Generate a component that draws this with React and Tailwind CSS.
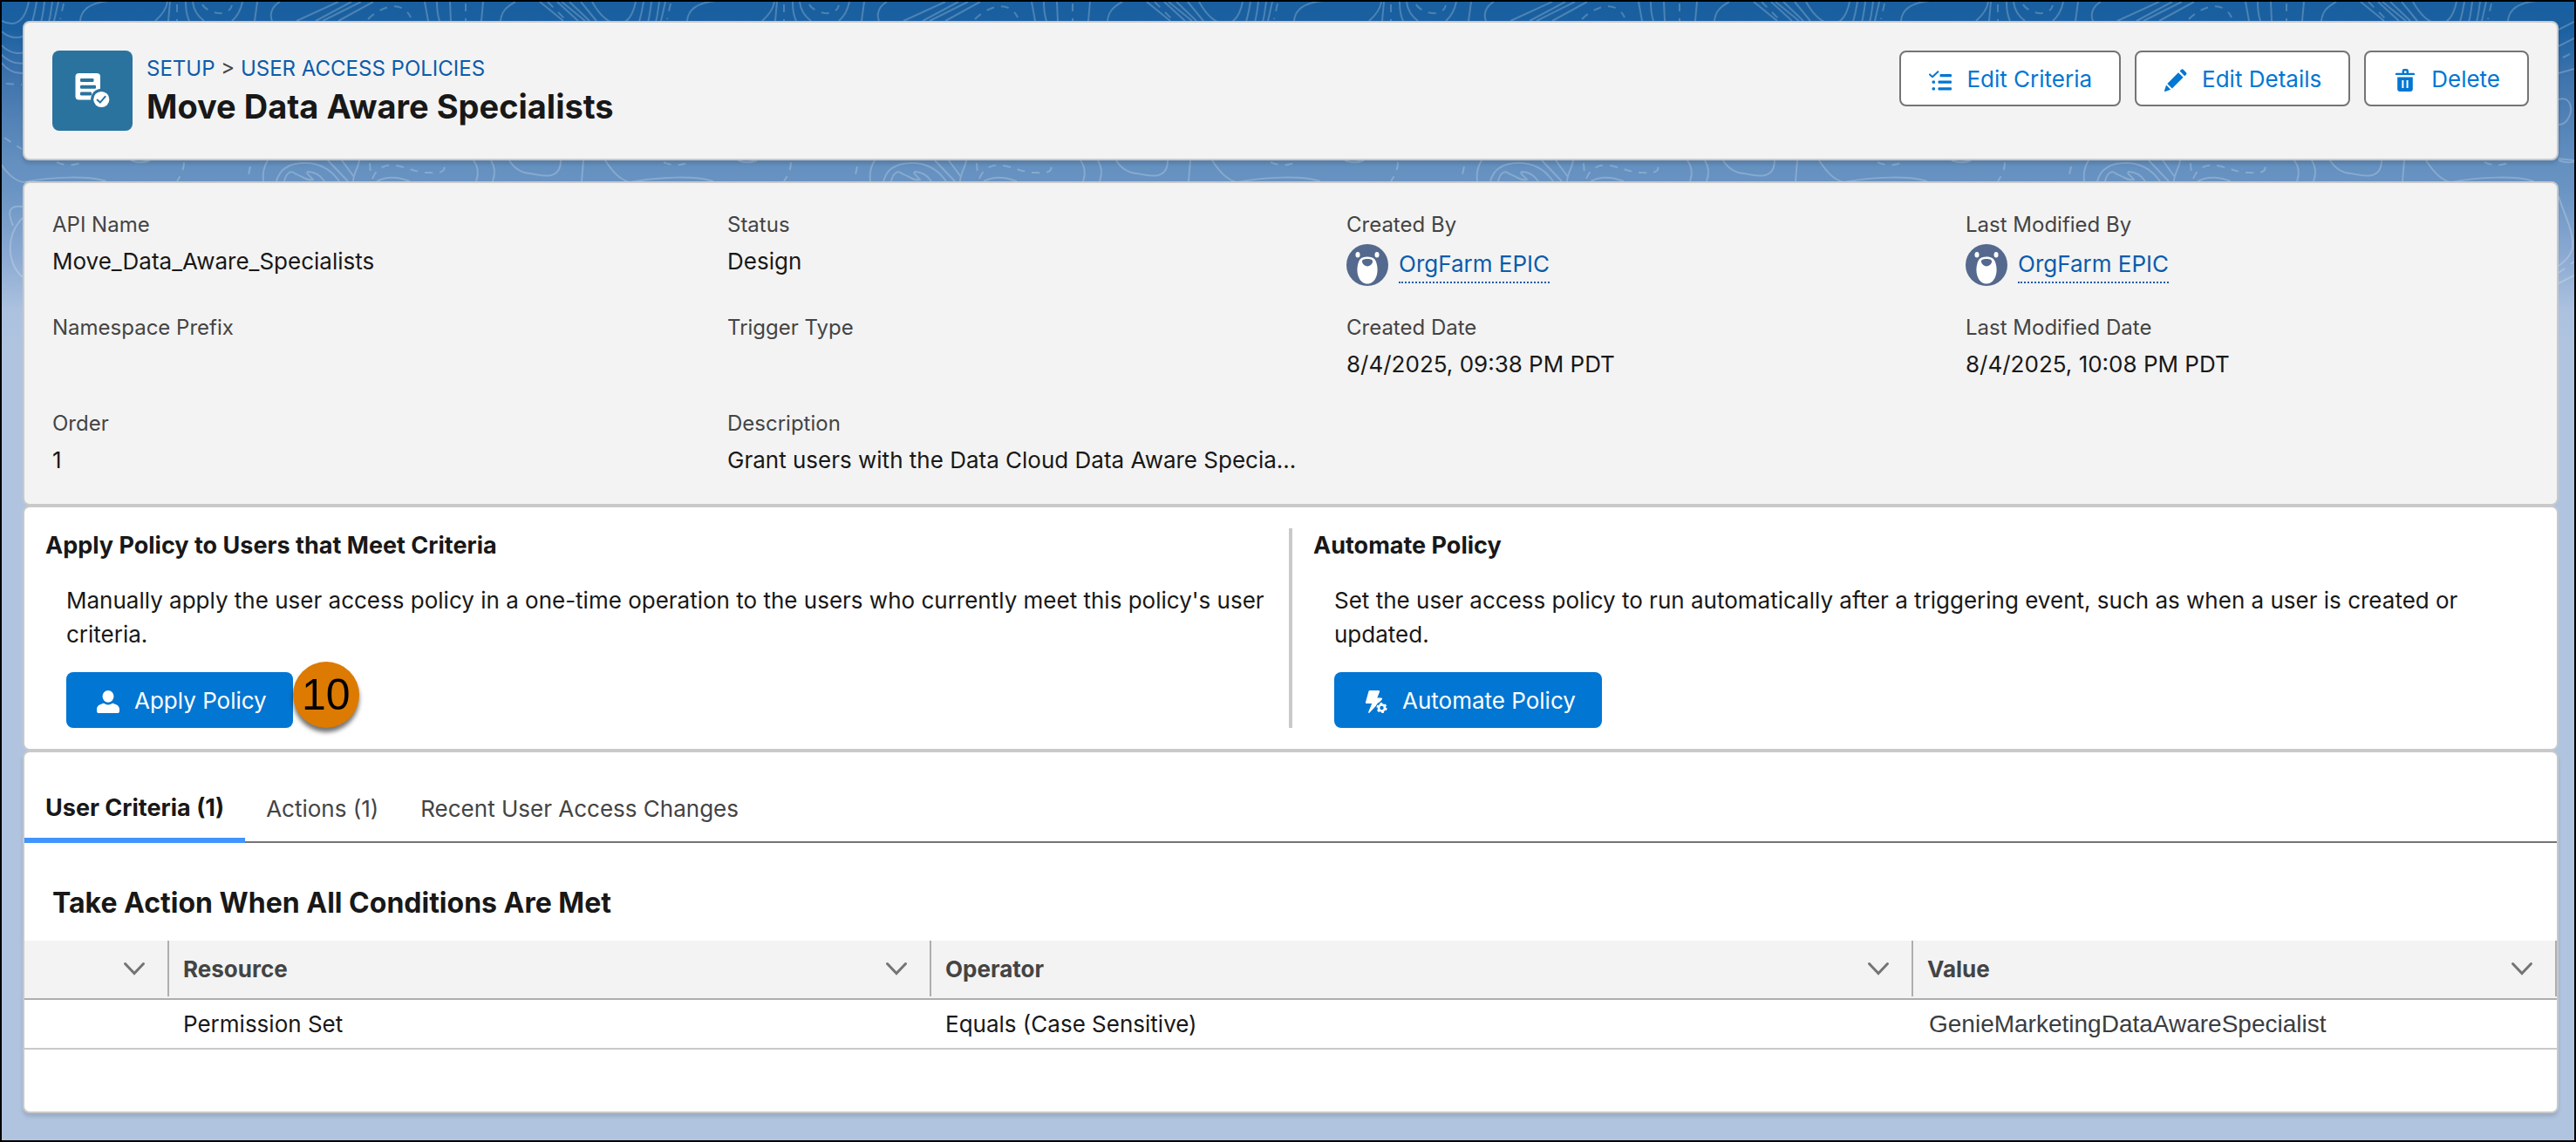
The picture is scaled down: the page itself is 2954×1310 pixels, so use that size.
import { useState } from "react";

const CONTOURS = [
  "M-17 2 C-8 18 2 27 13 27 C24 27 30 16 33 2",
  "M42 2 C40 14 38 26 32 38 C26 44 12 46 2 36 M51 2 C49 20 44 42 36 54 C28 64 12 64 0 50",
  "M60 2 C58 20 52 50 42 64 C32 76 14 76 0 61 M67 2 L62 24 C56 60 40 84 24 84 C14 84 6 78 0 70",
  "M92 24 C93 10 105 3 125 1 M178 24 C186 17 191 10 192 2 M195 2 L193 24",
  "M213 2 C213 10 214 18 217 24 M221 2 C222 12 226 18 234 24 M278 2 C276 12 273 18 266 24 M295 2 L292 24",
  "M321 2 C311 8 309 17 312 24 M388 2 L340 24 M403 2 L362 24 M414 2 L370 24 M428 2 L388 24",
  "M487 2 L491 24 M501 2 C501 12 502 18 504 24 M516 2 L517 24 M554 2 L552 24 M591 2 C580 8 575 14 574 24",
  "M619 2 L646 24 M639 2 L663 24 M644 2 L671 24 M653 2 L676 24 M666 2 L684 24",
  "M150 34 L168 25 M150 53 L168 44 M150 84 L168 79",
  "M150 114 C163 110 167 124 162 134 C159 141 154 143 150 143 M150 182 L168 184",
  "M150 225 C156 246 168 265 166 285 C162 297 156 300 150 305 M150 325 L168 316",
  "M-2 184 C6 196 14 206 26 209 C60 203 100 201 122 208 M150 184 C158 187 166 187 172 184",
  "M26 237 C10 235 8 243 15 259 M26 250 C6 270 8 302 26 318",
  "M307 184 C302 192 301 200 302 208 M317 208 C321 192 335 187 350 187 C368 187 380 195 389 208",
  "M326 208 C328 198 334 195 338 199 C346 202 352 208 359 206 C356 202 350 199 353 197 C362 197 368 202 372 208",
  "M376 184 L399 208 M392 184 L406 203 M412 184 C411 192 405 200 405 208 M432 208 C445 201 460 204 470 208",
  "M543 184 C549 192 549 200 546 208 M563 184 C568 192 568 200 565 208",
  "M584 184 C590 194 600 199 608 199 C616 200 624 203 632 201 C640 199 643 192 643 184 M669 184 L667 208",
];

const DASHED = [
  "M73 4 L69 22 M203 5 L203 24 M232 5 C236 14 262 22 266 6",
  "M422 22 C438 6 462 0 471 20 M534 4 L534 24 M628 2 L650 24",
  "M7 96 L25 97 M5 158 L25 171 M155 66 L165 61 M150 313 L168 300",
  "M65 186 C75 191 85 190 97 185 M211 186 C211 195 207 202 203 208 M287 191 L284 205",
  "M424 187 L425 200 M427 205 C433 190 445 188 455 190 C470 193 480 199 494 198 C510 200 513 192 506 186",
];

const TILE = 696;

function Backdrop() {
  return (
    <div className="absolute inset-0 overflow-hidden bg-[#b0c4df]">
      <div className="h-[400px] bg-[linear-gradient(to_bottom,#195f9f_0%,#1b61a1_8%,#4074ad_22%,#6490c0_46%,#6893c2_53%,#8dabd3_74%,#abc1df_88%,#b0c4df_100%)]">
        <svg className="h-full w-full" fill="none" stroke="#ffffff" strokeOpacity="0.22" strokeWidth="2" aria-hidden="true">
          {[0, 1, 2, 3, 4].map((n) => (
            <g key={n} transform={`translate(${n * TILE - 2} -2)`}>
              {CONTOURS.map((d) => (
                <path key={d} d={d} />
              ))}
              {DASHED.map((d) => (
                <path key={d} d={d} strokeDasharray="9 8" />
              ))}
            </g>
          ))}
        </svg>
      </div>
    </div>
  );
}

function PolicyIcon() {
  return (
    <svg viewBox="0 0 92 92" className="size-[92px] shrink-0 rounded-lg bg-[#2a739e]" aria-hidden="true">
      <rect x="26.5" y="26" width="28.5" height="30.5" rx="4" fill="#fff" />
      <g fill="#2a739e">
        <rect x="32" y="32" width="15.5" height="4" rx="1.2" />
        <rect x="32" y="39.7" width="18" height="4" rx="1.2" />
        <rect x="32" y="47.4" width="13" height="4" rx="1.2" />
        <circle cx="56.3" cy="56" r="12.2" />
      </g>
      <circle cx="56.3" cy="56" r="9.1" fill="#fff" />
      <path d="M51.6 56.6 L54.8 59.6 L60.6 52.8" fill="none" stroke="#2a739e" strokeWidth="2" strokeLinecap="round" strokeLinejoin="round" />
    </svg>
  );
}

function ChecklistIcon() {
  return (
    <svg viewBox="0 0 28 28" className="mt-1 size-7" fill="currentColor" aria-hidden="true">
      <path d="M2 7.4 L5 10.2 L11.4 4.2" fill="none" stroke="currentColor" strokeWidth="2" strokeLinecap="round" strokeLinejoin="round" />
      <rect x="13.5" y="7" width="13.5" height="3.2" rx="1" />
      <rect x="11.5" y="14.6" width="15.5" height="3.2" rx="1" />
      <rect x="11.5" y="22.2" width="15.5" height="3.2" rx="1" />
      <rect x="4.6" y="14.6" width="3.4" height="3.2" rx="1" />
      <rect x="4.6" y="22.2" width="3.4" height="3.2" rx="1" />
    </svg>
  );
}

function PencilIcon() {
  return (
    <svg viewBox="0 0 28 28" className="mt-1 size-7" fill="currentColor" aria-hidden="true">
      <path d="M20.4 1.8 a1.6 1.6 0 0 1 2.3 0 L26 5.2 a1.6 1.6 0 0 1 0 2.3 L24.2 9.2 L18.6 3.6 Z" />
      <path d="M17 5.2 L22.6 10.8 L9.8 23.4 L4.3 17.9 Z" />
      <path d="M3.1 19.6 L8.2 24.7 L2 27 a0.8 0.8 0 0 1 -1 -1 Z" />
    </svg>
  );
}

function TrashIcon() {
  return (
    <svg viewBox="0 0 28 28" className="mt-1 size-7" fill="currentColor" aria-hidden="true">
      <path d="M3 6.8 a1 1 0 0 1 1 -1 H10.6 V3.4 a2.4 2.4 0 0 1 2.4 -2.4 H15.6 a2.4 2.4 0 0 1 2.4 2.4 V5.8 H24 a1 1 0 0 1 1 1 V8 H3 Z M13 3.6 V5.8 H15.6 V3.6 Z" fillRule="evenodd" />
      <path d="M5.2 10.6 H22.8 V24 a3 3 0 0 1 -3 3 H8.2 a3 3 0 0 1 -3 -3 Z M10.4 14 V23 H12.4 V14 Z M15.6 14 V23 H17.6 V14 Z" fillRule="evenodd" />
    </svg>
  );
}

function UserIcon() {
  return (
    <svg viewBox="0 0 28 28" className="mt-1 size-7" fill="currentColor" aria-hidden="true">
      <ellipse cx="14" cy="7.8" rx="6.5" ry="6.9" />
      <path d="M1 23 C1 18 4.6 17.2 7.8 16 C9.2 15.6 9.8 16.2 10.8 16.7 C12.8 17.7 15.2 17.7 17.2 16.7 C18.2 16.2 18.8 15.6 20.2 16 C23.4 17.2 27 18 27 23 V24.4 A2.6 2.6 0 0 1 24.4 27 H3.6 A2.6 2.6 0 0 1 1 24.4 Z" />
    </svg>
  );
}

function FlowIcon() {
  return (
    <svg viewBox="0 0 28 28" className="mt-1 size-7" fill="currentColor" aria-hidden="true">
      <path d="M7 1 H17 C18 1 18.3 1.8 18 2.6 L15.4 9.6 H20 C21 9.6 21.3 10.6 20.7 11.4 L6.6 26.6 C5.8 27.4 4.8 26.8 5.2 25.8 L9.2 16 H3.2 C2.4 16 1.8 15.3 2 14.4 L5.4 2.2 C5.6 1.4 6.2 1 7 1 Z" />
      <circle cx="20.5" cy="21" r="7" fill="#0176d3" />
      <circle cx="20.5" cy="21" r="3.5" fill="none" stroke="currentColor" strokeWidth="2.6" />
      <circle cx="20.5" cy="21" r="5.2" fill="none" stroke="currentColor" strokeWidth="1.8" strokeDasharray="2.8 2.65" />
    </svg>
  );
}

function Avatar() {
  return (
    <svg viewBox="0 0 48 48" className="size-12 shrink-0" aria-hidden="true">
      <circle cx="24" cy="24" r="24" fill="#54698d" />
      <g fill="#fff">
        <ellipse cx="13" cy="12.3" rx="2.5" ry="3.2" />
        <ellipse cx="35" cy="12.3" rx="2.5" ry="3.2" />
        <path d="M24 14.5 C32 14.5 34 18.5 35.2 25 C37 35 32.5 45.6 24 45.6 C15.5 45.6 11 35 12.8 25 C14 18.5 16 14.5 24 14.5 Z" />
      </g>
      <path d="M24 17 C28 17 30.5 18 30 20.6 C29.4 23.6 26.6 25.4 24 25.4 C21.4 25.4 18.6 23.6 18 20.6 C17.5 18 20 17 24 17 Z" fill="#54698d" />
    </svg>
  );
}

function HeaderButton({ icon, children }) {
  return (
    <button className="flex h-16 items-center gap-4 rounded-lg border-2 border-[#747474] bg-white px-[31px] text-[#0176d3]">
      {icon}
      {children}
    </button>
  );
}

function BrandButton({ icon, children }) {
  return (
    <button className="flex h-16 items-center gap-4 rounded-lg bg-[#0176d3] pr-[30px] pl-[34px] text-white">
      {icon}
      {children}
    </button>
  );
}

function Field({ label, children }) {
  return (
    <div>
      <dt className="mb-1 text-[24px] leading-9 text-[#444444]">{label}</dt>
      <dd className="leading-10 whitespace-nowrap">{children}</dd>
    </div>
  );
}

function UserLink({ name }) {
  return (
    <span className="flex items-center gap-3">
      <Avatar />
      <a href="#user" className="border-b-2 border-dotted border-[#0b5cab] text-[#0b5cab]">
        {name}
      </a>
    </span>
  );
}

const tabs = ["User Criteria (1)", "Actions (1)", "Recent User Access Changes"];

const columns = [
  { label: "", width: "w-[166px]" },
  { label: "Resource", width: "w-[874px]" },
  { label: "Operator", width: "w-[1126px]" },
  { label: "Value", width: "w-auto" },
];

const card = "rounded-lg border-2 border-[#c9c9c9]";

function App() {
  const [activeTab, setActiveTab] = useState(tabs[0]);

  return (
    <div className="relative min-h-screen border-2 border-black font-['Inter','Liberation_Sans',sans-serif] text-[26px] text-[#181818]">
      <Backdrop />

      <main className="relative pt-[22px] pr-[18px] pb-7 pl-6">
        <header className={`${card} mb-6 flex items-start justify-between bg-[#f3f3f3] p-8 shadow-[0_4px_4px_rgba(0,0,0,0.12)]`}>
          <div className="flex gap-4">
            <PolicyIcon />
            <div className="pt-[3px]">
              <nav className="text-[24px] leading-9 text-[#444444]">
                <a href="#setup" className="text-[#0b5cab]">SETUP</a>
                {" > "}
                <a href="#policies" className="text-[#0b5cab]">USER ACCESS POLICIES</a>
              </nav>
              <h1 className="text-[38px] leading-[50px] font-bold">Move Data Aware Specialists</h1>
            </div>
          </div>
          <div className="mb-7 flex gap-4">
            <HeaderButton icon={<ChecklistIcon />}>Edit Criteria</HeaderButton>
            <HeaderButton icon={<PencilIcon />}>Edit Details</HeaderButton>
            <HeaderButton icon={<TrashIcon />}>Delete</HeaderButton>
          </div>
        </header>

        <section className={`${card} bg-[#f3f3f3] px-8 py-[30px]`}>
          <dl className="grid grid-cols-[774fr_710fr_710fr_646fr] gap-y-[30px]">
            <Field label="API Name">Move_Data_Aware_Specialists</Field>
            <Field label="Status">Design</Field>
            <Field label="Created By"><UserLink name="OrgFarm EPIC" /></Field>
            <Field label="Last Modified By"><UserLink name="OrgFarm EPIC" /></Field>
            <Field label="Namespace Prefix" />
            <Field label="Trigger Type" />
            <Field label="Created Date">8/4/2025, 09:38 PM PDT</Field>
            <Field label="Last Modified Date">8/4/2025, 10:08 PM PDT</Field>
            <Field label="Order">1</Field>
            <Field label="Description">Grant users with the Data Cloud Data Aware Specia...</Field>
          </dl>
        </section>

        <section className={`${card} flex bg-white py-6`}>
          <div className="flex-1 border-r-2 border-[#c9c9c9] px-6">
            <h2 className="mb-6 text-[27px] leading-[39px] font-bold">Apply Policy to Users that Meet Criteria</h2>
            <div className="pl-6">
              <p className="mb-6 leading-[39px]">
                Manually apply the user access policy in a one-time operation to the users who currently meet this
                policy's user criteria.
              </p>
              <div className="relative w-fit">
                <BrandButton icon={<UserIcon />}>Apply Policy</BrandButton>
                <span className="absolute bottom-0 left-full flex size-[76px] items-center justify-center rounded-full bg-[#dd7a01] font-['Liberation_Sans',sans-serif] text-[50px] leading-none text-black shadow-[0_5px_5px_rgba(0,0,0,0.55)]">
                  10
                </span>
              </div>
            </div>
          </div>
          <div className="flex-1 border-l-2 border-[#c9c9c9] px-6">
            <h2 className="mb-6 text-[27px] leading-[39px] font-bold">Automate Policy</h2>
            <div className="pl-6">
              <p className="mb-6 leading-[39px]">
                Set the user access policy to run automatically after a triggering event, such as when a user is
                created or updated.
              </p>
              <BrandButton icon={<FlowIcon />}>Automate Policy</BrandButton>
            </div>
          </div>
        </section>

        <section className={`${card} bg-white pb-[71px] shadow-[0_4px_4px_rgba(0,0,0,0.12)]`}>
          <div role="tablist" className="flex pt-6 shadow-[inset_0_-2px_0_#747474]">
            {tabs.map((tab) => (
              <button
                key={tab}
                role="tab"
                aria-selected={tab === activeTab}
                onClick={() => setActiveTab(tab)}
                className={
                  tab === activeTab
                    ? "h-20 px-6 text-[27px] font-bold shadow-[inset_0_-6px_0_#4294ff]"
                    : "h-20 px-6 text-[#444444]"
                }
              >
                {tab}
              </button>
            ))}
          </div>

          <h2 className="px-8 pt-[45px] pb-[19px] text-[32px] leading-[48px] font-bold">
            Take Action When All Conditions Are Met
          </h2>

          <table className="w-full table-fixed border-collapse text-left">
            <thead>
              <tr className="border-b-2 border-[#aeaeae] bg-[#f3f3f3]">
                {columns.map((col) => (
                  <th key={col.label} className={`${col.width} p-0 pb-[2px] font-bold text-[#444444]`}>
                    <div className="flex h-16 items-center justify-between border-r-2 border-[#aeaeae] pr-[25px] pl-4">
                      <span>{col.label}</span>
                      <button aria-label={`${col.label} column actions`}>
                        <svg viewBox="0 0 26 16" className="h-4 w-[26px]" fill="none" stroke="#747474" strokeWidth="3" strokeLinecap="round" aria-hidden="true">
                          <path d="M2.5 2.5 L13 13.5 L23.5 2.5" />
                        </svg>
                      </button>
                    </div>
                  </th>
                ))}
              </tr>
            </thead>
            <tbody>
              <tr className="h-[57px] border-b-2 border-[#c9c9c9]">
                <td />
                <td className="pl-4">Permission Set</td>
                <td className="pl-4">Equals (Case Sensitive)</td>
                <td className="pl-[18px] font-['Liberation_Sans',sans-serif] text-[28px] leading-none text-[#3a3d42]">
                  GenieMarketingDataAwareSpecialist
                </td>
              </tr>
            </tbody>
          </table>
        </section>
      </main>
    </div>
  );
}

export default App;
